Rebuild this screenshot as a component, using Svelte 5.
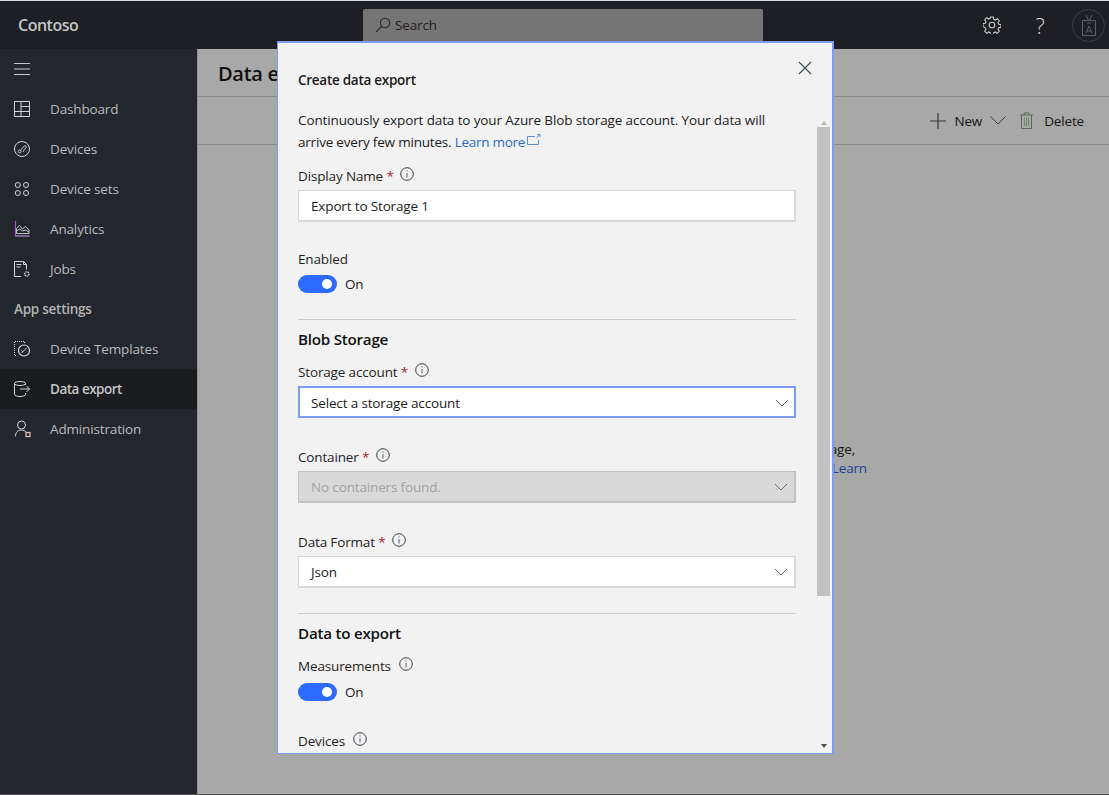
<script>
  const nav = [
    { id: 'dash', label: 'Dashboard' },
    { id: 'dev', label: 'Devices' },
    { id: 'sets', label: 'Device sets' },
    { id: 'ana', label: 'Analytics' },
    { id: 'jobs', label: 'Jobs' }
  ];
  const settings = [
    { id: 'tpl', label: 'Device Templates' },
    { id: 'exp', label: 'Data export', active: true },
    { id: 'adm', label: 'Administration' }
  ];
</script>

{#snippet navIcon(id)}
  <svg class="nav-icon" width="18" height="18" viewBox="0 0 18 18" fill="none" stroke="#d4d4d4" stroke-width="1">
    {#if id === 'dash'}
      <path d="M.5 1.500h15v15H.500zM7 1.500v15M7 6.500h8.500M.5 11.500h15" />
    {:else if id === 'dev'}
      <circle cx="8" cy="9" r="7.500" />
      <circle cx="5.700" cy="11.500" r="1.400" stroke-width="0.900" />
      <path d="M6.500 10.300L10 6.200a1.400 1.400 0 0 1 2.300 1.500c-.6.900-1.900.9-2.300 1.800-.3.800-.2 2-1 2.500" stroke-width="0.900" />
    {:else if id === 'sets'}
      <circle cx="3.800" cy="5" r="2.500" /><circle cx="12" cy="5" r="2.500" />
      <circle cx="3.800" cy="13" r="2.500" /><circle cx="12" cy="13" r="2.500" />
    {:else if id === 'ana'}
      <path d="M2.500 13.500h12.500V10L11.500 6.500 8.500 9 5.500 5.500l-3 3zM2.500 11l3-2 3 2 3-1 3.500 2" stroke-width="0.900" />
      <path d="M1.500 16h14" stroke="#c9a6f0" />
      <path d="M1.500 1v15.500" stroke="#b14fe0" stroke-width="1.200" />
    {:else if id === 'jobs'}
      <path d="M7 16.500H.5V1.500h9l3 3v5M9.500 1.500v3h3M2.500 4.500h5M2.500 7h4" />
      <circle cx="12.800" cy="14" r="2.200" stroke-dasharray="1.400 0.600" stroke-width="1.300" />
    {:else if id === 'tpl'}
      <path d="M2 15.500H.5V1.500h10V4" stroke-dasharray="1 1" />
      <circle cx="10" cy="10.500" r="5.500" stroke-width="1.200" />
      <path d="M7.500 13l5-5M7.500 10.500L9 12" />
    {:else if id === 'exp'}
      <path d="M11.500 5V3.500c0-1.200-2.500-2-5.500-2s-5.500.8-5.500 2v11c0 1.200 2.500 2 5.500 2s5.500-.8 5.500-2V13M.5 3.500c0 1.200 2.500 2 5.500 2s5.500-.8 5.500-2M6 9h9.500M12.500 6l3 3-3 3" />
    {:else}
      <circle cx="7.500" cy="5" r="4" />
      <path d="M1.500 16.500c0-4 2-6.500 6-6.500 2 0 3.500.8 4.500 2" />
      <rect x="12" y="12.500" width="4" height="4" stroke="#e6b8b8" stroke-width="1.300" />
    {/if}
  </svg>
{/snippet}

{#snippet info()}
  <svg class="info" width="14" height="14" viewBox="0 0 14 14" fill="none" stroke="#3d3d3d">
    <circle cx="7" cy="7" r="6.300" />
    <path d="M7 6v4.500M7 3.400v1.200" stroke="#4a6a8a" />
  </svg>
{/snippet}

{#snippet chevron()}
  <svg class="chev" width="14" height="8" viewBox="0 0 14 8" fill="none" stroke="#6f6f6f">
    <path d="M1 1l6 6 6-6" />
  </svg>
{/snippet}

{#snippet toggle()}
  <div class="toggle-row">
    <span class="toggle"><span class="knob"></span></span>
    <span>On</span>
  </div>
{/snippet}

<div class="page">
  <header class="top">
    <div class="brand">Contoso</div>
    <div class="search">
      <svg width="16" height="16" viewBox="0 0 16 16" fill="none" stroke="#2e2a28" stroke-width="1.100">
        <circle cx="10" cy="6" r="4.700" />
        <path d="M6.500 9.500L1 15" />
      </svg>
      <span>Search</span>
    </div>
    <div class="top-actions">
      <svg width="18" height="18" viewBox="0 0 18 18" fill="none" stroke="#c9c9c9" stroke-width="1.100">
        <circle cx="9" cy="9" r="2.800" />
        <path d="M7.600 1h2.800l.4 2.300 1.500.7 2-1.300 2 2-1.300 2 .7 1.500 2.300.4v2.800l-2.300.4-.7 1.500 1.300 2-2 2-2-1.300-1.500.7-.4 2.300H7.600l-.4-2.300-1.500-.7-2 1.300-2-2 1.300-2-.7-1.500L0 10.400V7.600l2.300-.4.700-1.500-1.300-2 2-2 2 1.300 1.500-.7z" />
      </svg>
      <span class="help">?</span>
      <span class="avatar">
        <svg width="14" height="24" viewBox="0 0 14 24" fill="none" stroke="#5c5e62">
          <path d="M.5 7.500h13v15H.5zM4 2l2.500 5.500M10 2L7.500 7.500M5 10h4M4 20l3-7 3 7M5 18h4" />
        </svg>
      </span>
    </div>
  </header>

  <div class="body">
    <aside class="side">
      <div class="row">
        <svg class="nav-icon" width="18" height="18" viewBox="0 0 18 18" stroke="#c8c8c8"><path d="M0 3.500h16M0 9h16M0 14.500h16" /></svg>
      </div>
      {#each nav as n}
        <div class="row">{@render navIcon(n.id)}<span>{n.label}</span></div>
      {/each}
      <div class="row group">App settings</div>
      {#each settings as n}
        <div class="row" class:active={n.active}>{@render navIcon(n.id)}<span>{n.label}</span></div>
      {/each}
    </aside>

    <main class="main">
      <h1 class="page-title">Data export</h1>
      <div class="commands">
        <span class="cmd">
          <svg width="16" height="16" viewBox="0 0 16 16" stroke="#3a3a3a" stroke-width="1.200"><path d="M8 0v16M0 8h16" /></svg>
          New
        </span>
        <svg class="cmd-chev" width="16" height="9" viewBox="0 0 16 9" fill="none" stroke="#3f3f3f"><path d="M.5.5L8 8 15.500.5" /></svg>
        <span class="cmd del">
          <svg width="13" height="17" viewBox="0 0 13 17" fill="none" stroke="#5f6a5f"><path d="M0 3h13M4 3V1h5v2M1.500 3v13.500h10V3" /><path d="M4.500 5.500v8.500M6.500 5.500v8.500M8.500 5.500v8.500" stroke="#6f8a6f" /></svg>
          Delete
        </span>
      </div>
      <div class="empty">
        <div class="l1">Use data export to continuously send your data to Azure storage,</div>
        <div class="l2">Event Hubs or Service Bus for further analysis. <span class="empty-link">Learn</span></div>
      </div>
    </main>
  </div>

  <div class="modal">
    <button class="close" aria-label="Close">
      <svg width="14" height="14" viewBox="0 0 14 14" stroke="#3c4a55" stroke-width="1.100"><path d="M1 1l12 12M13 1L1 13" /></svg>
    </button>
    <div class="scrollbar">
      <span class="up"></span>
      <span class="thumb"></span>
      <span class="down"></span>
    </div>

    <div class="form">
      <h2 class="title">Create data export</h2>
      <p class="intro">Continuously export data to your Azure Blob storage account. Your data will <span class="tight">arrive every few minutes.</span> <span class="link">Learn more</span>
        <svg class="ext" width="14" height="11" viewBox="0 0 14 11" fill="none" stroke="#5b8bd8"><path d="M8 2.500H.5v8h11V6M9.500 3.500L13 .5M10.500.5H13V3" /></svg>
      </p>

      <div class="label first">Display Name <span class="req">*</span>{@render info()}</div>
      <div class="input">Export to Storage 1</div>

      <div class="label gap-lg">Enabled</div>
      {@render toggle()}

      <hr class="rule r1" />
      <h3 class="section">Blob Storage</h3>

      <div class="label after-section">Storage account <span class="req">*</span>{@render info()}</div>
      <div class="input select focus">Select a storage account{@render chevron()}</div>

      <div class="label gap-xl">Container <span class="req">*</span>{@render info()}</div>
      <div class="input select disabled">No containers found.{@render chevron()}</div>

      <div class="label gap-xl">Data Format <span class="req">*</span>{@render info()}</div>
      <div class="input select">Json{@render chevron()}</div>

      <hr class="rule r2" />
      <h3 class="section">Data to export</h3>

      <div class="label after-section">Measurements {@render info()}</div>
      <div class="toggle-wrap">{@render toggle()}</div>

      <div class="label devices">Devices {@render info()}</div>
    </div>
  </div>
</div>

<style>
  :global(body) {
    margin: 0;
    background: #a8a8a8;
  }
  .page {
    --ui: "Open Sans", "Noto Sans", "Liberation Sans", sans-serif;
    position: relative;
    width: 1109px;
    height: 795px;
    overflow: hidden;
    display: flex;
    flex-direction: column;
    font-family: var(--ui);
    font-size: 13.500px;
    letter-spacing: -0.150px;
    color: #1c1c1c;
    background: #a8a8a8;
    border-top: 1px solid #d8d8d8;
    border-bottom: 1px solid #555;
    box-sizing: border-box;
  }
  .top {
    height: 48px;
    flex: none;
    background: #1d1f24;
    display: flex;
    align-items: center;
    position: relative;
  }
  .brand {
    width: 363px;
    padding-left: 18px;
    box-sizing: border-box;
    font-size: 16px;
    font-weight: 600;
    letter-spacing: -0.500px;
    color: #c4c4c4;
  }
  .search {
    width: 400px;
    height: 32px;
    box-sizing: border-box;
    padding-left: 12px;
    background: #757575;
    border-radius: 2px 2px 0 0;
    display: flex;
    align-items: center;
    gap: 4px;
    color: #26221f;
  }
  .top-actions {
    margin-left: auto;
    display: flex;
    align-items: center;
    padding-right: 4px;
  }
  .help {
    font-family: "Open Sans", sans-serif;
    font-weight: 300;
    font-size: 22px;
    color: #d4d4d4;
    margin-left: 27px;
    width: 24px;
    text-align: center;
    line-height: 1;
  }
  .avatar {
    width: 31px;
    height: 31px;
    margin-left: 20px;
    border: 1px solid #3c3e43;
    border-radius: 50%;
    display: flex;
    align-items: center;
    justify-content: center;
  }
  .body {
    flex: 1;
    display: flex;
    min-height: 0;
  }
  .side {
    width: 197px;
    flex: none;
    background: #23272d;
    border-right: 1px solid #8f8f8f;
    box-sizing: content-box;
    color: #b9b9b9;
  }
  .row {
    height: 40px;
    display: flex;
    align-items: center;
    padding-left: 14px;
    gap: 18px;
  }
  .nav-icon {
    flex: none;
    width: 18px;
  }
  .group {
    font-weight: 600;
    font-size: 13.500px;
    color: #b4b4b4;
    letter-spacing: -0.250px;
  }
  .active {
    background: #1a1c1f;
    font-weight: 600;
    letter-spacing: -0.500px;
    color: #c4c4c4;
  }
  .main {
    flex: 1;
    min-width: 0;
    display: flex;
    flex-direction: column;
  }
  .page-title {
    margin: 0;
    height: 47px;
    flex: none;
    box-sizing: content-box;
    padding-left: 20px;
    font-size: 20px;
    font-weight: 600;
    line-height: 50px;
    letter-spacing: -0.300px;
    color: #111;
    border-bottom: 1px solid #8c8c8c;
  }
  .commands {
    height: 47px;
    flex: none;
    border-bottom: 1px solid #8c8c8c;
    display: flex;
    align-items: center;
    justify-content: flex-end;
    padding-right: 25px;
    color: #161616;
  }
  .cmd {
    display: flex;
    align-items: center;
    gap: 8px;
  }
  .cmd-chev {
    margin: 0 14px 0 8px;
  }
  .del {
    gap: 11px;
  }
  .empty {
    margin-top: 295px;
    padding-right: 242px;
    text-align: right;
    line-height: 19px;
    color: #151515;
    white-space: nowrap;
  }
  .l1 {
    margin-right: 12px;
  }
  .empty-link {
    color: #1f3f8f;
  }
  .modal {
    position: absolute;
    left: 277px;
    top: 40px;
    width: 557px;
    height: 713px;
    box-sizing: border-box;
    background: #f2f2f2;
    border: 1px solid #7c9df0;
    border-width: 2px 2px 1px 1px;
    overflow: hidden;
  }
  .close {
    position: absolute;
    right: 20px;
    top: 18px;
    padding: 0;
    border: 0;
    background: none;
    line-height: 0;
  }
  .scrollbar {
    position: absolute;
    right: 1px;
    top: 70px;
    bottom: 0;
    width: 14px;
  }
  .up, .down {
    position: absolute;
    left: 4px;
    width: 0;
    height: 0;
    border-left: 3px solid transparent;
    border-right: 3px solid transparent;
  }
  .up {
    top: 8px;
    border-bottom: 4px solid #b5b5b5;
  }
  .down {
    bottom: 5px;
    border-top: 4px solid #505050;
  }
  .thumb {
    position: absolute;
    left: 0;
    right: 1px;
    top: 14px;
    height: 469px;
    background: #c1c1c1;
  }
  .form {
    padding: 27px 36px 0 20px;
  }
  .title {
    margin: 0;
    font-size: 13.500px;
    font-weight: 600;
    line-height: 20px;
    letter-spacing: -0.270px;
    color: #1a1a1a;
  }
  .intro {
    margin: 19px 0 0;
    line-height: 22px;
    width: 490px;
    letter-spacing: -0.120px;
  }
  .tight {
    letter-spacing: -0.200px;
  }
  .link {
    color: #2b6cc4;
    letter-spacing: -0.300px;
  }
  .ext {
    vertical-align: 2px;
    margin-left: -1px;
  }
  .label {
    height: 20px;
    line-height: 20px;
    display: flex;
    align-items: center;
    white-space: pre;
    color: #1f1f1f;
  }
  .req {
    color: #a4262c;
    margin-right: 2px;
  }
  .info {
    margin: -4px 0 0 4.500px;
  }
  .first {
    margin-top: 13px;
  }
  .gap-lg {
    margin-top: 27px;
  }
  .gap-xl {
    margin-top: 29px;
  }
  .after-section {
    margin-top: 12px;
  }
  .input {
    margin-top: 4px;
    height: 32px;
    box-sizing: border-box;
    background: #fff;
    border: 1px solid #d9d9d9;
    border-bottom-width: 2px;
    border-right-width: 2px;
    padding: 0 12px;
    display: flex;
    align-items: center;
    justify-content: space-between;
    color: #1c1c1c;
  }
  .select {
    padding-top: 1px;
  }
  .focus {
    border: 2px solid #7c9df0;
    padding-left: 11px;
    padding-right: 11px;
  }
  .disabled {
    background: #d9d9d9;
    border-color: #c2c2c2;
    color: #a3a3a3;
  }
  .chev {
    margin-right: -6px;
  }
  .toggle-row {
    margin-top: 6px;
    height: 18px;
    display: flex;
    align-items: center;
    gap: 8px;
  }
  .toggle-wrap {
    margin-top: 7px;
  }
  .toggle-wrap .toggle-row {
    margin-top: 0;
  }
  .toggle {
    width: 39px;
    height: 18px;
    border-radius: 9px;
    background: #2e6bff;
    position: relative;
    display: block;
  }
  .knob {
    position: absolute;
    right: 5px;
    top: 4px;
    width: 10px;
    height: 10px;
    border-radius: 50%;
    background: #fff;
  }
  .rule {
    margin: 0;
    border: 0;
    height: 1px;
    background: #cccccc;
  }
  .r1 {
    margin-top: 26px;
  }
  .r2 {
    margin-top: 25px;
  }
  .section {
    margin: 8px 0 0;
    font-size: 15.200px;
    font-weight: 600;
    line-height: 22px;
    letter-spacing: -0.250px;
    color: #111;
  }
  .devices {
    margin-top: 30px;
  }
</style>
